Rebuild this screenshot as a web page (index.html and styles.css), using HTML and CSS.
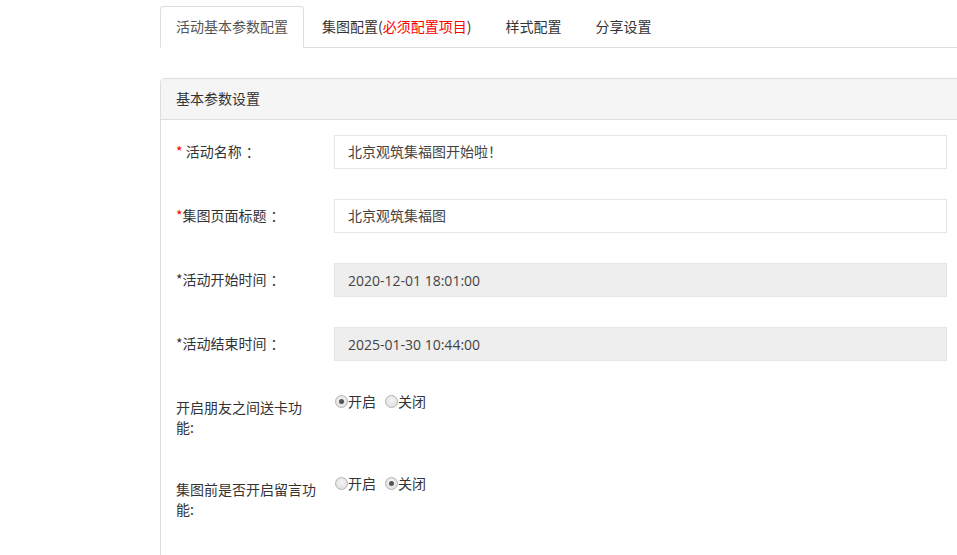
FILE: index.html
```html
<!DOCTYPE html>
<html lang="zh-CN">
<head>
<meta charset="utf-8">
<title>活动配置</title>
<link rel="stylesheet" href="styles.css">
</head>
<body>
<div class="main">
  <ul class="tabs">
    <li class="tab active"><a>活动基本参数配置</a></li>
    <li class="tab"><a>集图配置(<span class="req">必须配置项目</span>)</a></li>
    <li class="tab"><a>样式配置</a></li>
    <li class="tab"><a>分享设置</a></li>
  </ul>

  <div class="panel">
    <div class="panel-heading">基本参数设置</div>
    <div class="panel-body">
      <div class="row">
        <label class="label"><span class="star">*</span> 活动名称<span class="p">：</span></label>
        <input class="field" type="text" value="北京观筑集福图开始啦！">
      </div>
      <div class="row">
        <label class="label"><span class="star">*</span>集图页面标题<span class="p">：</span></label>
        <input class="field" type="text" value="北京观筑集福图">
      </div>
      <div class="row">
        <label class="label">*活动开始时间<span class="p">：</span></label>
        <input class="field disabled" type="text" value="2020-12-01 18:01:00" disabled>
      </div>
      <div class="row">
        <label class="label">*活动结束时间<span class="p">：</span></label>
        <input class="field disabled" type="text" value="2025-01-30 10:44:00" disabled>
      </div>
      <div class="row row-radio">
        <label class="label">开启朋友之间送卡功能:</label>
        <div class="radios">
          <label class="radio"><input type="radio" name="send" checked>开启</label>
          <label class="radio"><input type="radio" name="send">关闭</label>
        </div>
      </div>
      <div class="row row-radio">
        <label class="label">集图前是否开启留言功能:</label>
        <div class="radios">
          <label class="radio"><input type="radio" name="msg">开启</label>
          <label class="radio"><input type="radio" name="msg" checked>关闭</label>
        </div>
      </div>
    </div>
  </div>
</div>
</body>
</html>
```

FILE: styles.css
```css
html, body {
  margin: 0;
  padding: 0;
  overflow: hidden;
  background: #fff;
}

body {
  font-family: "Noto Sans CJK SC", "Noto Sans", sans-serif;
  font-size: 14px;
  line-height: 20px;
  color: #333;
}

.main {
  width: 803px;
  padding: 6px 0 0 160px;
}

.tabs {
  list-style: none;
  margin: 0;
  padding: 0;
  display: flex;
  border-bottom: 1px solid #ddd;
  width: 820px;
}

.tab {
  margin: 0 2px -1px 0;
}

.tab a {
  display: block;
  padding: 9px 15px 11px;
  line-height: 20px;
  border: 1px solid transparent;
  border-radius: 4px 4px 0 0;
  color: #333;
}

.tab.active a {
  color: #555;
  background: #fff;
  border-color: #ddd #ddd transparent;
}

.req {
  color: #f00;
}

.panel {
  margin-top: 30px;
  border: 1px solid #ddd;
  border-radius: 4px 4px 0 0;
  min-height: 560px;
}

.panel-heading {
  background: #f5f5f5;
  border-bottom: 1px solid #ddd;
  padding: 9px 15px 11px;
  line-height: 20px;
  color: #333;
  border-radius: 3px 3px 0 0;
}

.panel-body {
  padding: 15px;
}

.row {
  display: grid;
  grid-template-columns: 142px 1fr;
  column-gap: 16px;
  margin-bottom: 30px;
  align-items: start;
}

.row-radio {
  min-height: 52px;
}

.label {
  padding-top: 6px;
  line-height: 20px;
  color: #333;
}

.p {
  padding-left: 4px;
}

.star {
  color: #f00;
}

.field {
  box-sizing: border-box;
  height: 34px;
  width: 100%;
  margin: 0;
  padding: 5px 13px 7px;
  border: 1px solid #e6e6e6;
  background: #fff;
  font-family: inherit;
  font-size: 14px;
  color: #444;
  outline: none;
}

.field.disabled {
  background: #eee;
  color: #444;
  -webkit-text-fill-color: #444;
  opacity: 1;
  font-family: "Open Sans", "Noto Sans CJK SC", sans-serif;
  padding: 6px 13px;
}

.radios {
  display: flex;
  align-items: center;
  gap: 8px;
  padding-top: 0;
}

.radio {
  display: flex;
  align-items: center;
  line-height: 20px;
  color: #333;
}

.radio input {
  -webkit-appearance: none;
  appearance: none;
  box-sizing: border-box;
  width: 13px;
  height: 13px;
  margin: 1px 0 0 1px;
  border: 1px solid #b4b4b4;
  border-radius: 50%;
  background: radial-gradient(circle at 50% 40%, #f4f4f4 0%, #dcdcdc 100%);
  position: relative;
}

.radio input:checked::after {
  content: "";
  position: absolute;
  left: 3px;
  top: 3px;
  width: 5px;
  height: 5px;
  border-radius: 50%;
  background: #555;
}
```
